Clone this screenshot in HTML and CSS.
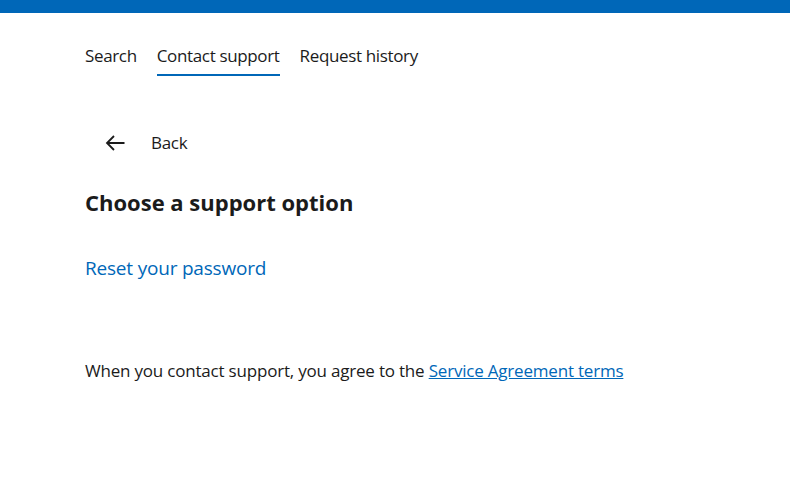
FILE: index.html
```html
<!DOCTYPE html>
<html lang="en">
<head>
<meta charset="utf-8">
<link rel="stylesheet" href="styles.css">
</head>
<body>
<div class="topbar"></div>
<main class="content">
  <nav class="tabs">
    <a class="tab">Search</a>
    <a class="tab active">Contact support</a>
    <a class="tab">Request history</a>
  </nav>
  <button class="back">
    <svg width="20" height="16" viewBox="0 0 20 16" aria-hidden="true"><path d="M19.5 8H2M9 1L2 8l7 7" fill="none" stroke="#1b1b1b" stroke-width="1.8"/></svg>
    <span>Back</span>
  </button>
  <h1 class="title">Choose a support option</h1>
  <a class="option">Reset your password</a>
  <p class="terms">When you contact support, you agree to the <a class="terms-link">Service Agreement terms</a></p>
</main>
</body>
</html>
```
FILE: styles.css
```css
html, body { margin: 0; padding: 0; background: #fff; }
body { font-family: "Open Sans", "Noto Sans", sans-serif; color: #1b1b1b; }
.topbar { height: 13px; background: #0067b8; }
.content { padding: 0 0 0 85px; display: flex; flex-direction: column; align-items: flex-start; }
.tabs { display: flex; gap: 20px; margin-top: 31px; }
.tab { font-size: 17px; line-height: 24px; padding-bottom: 6px; border-bottom: 2px solid transparent; color: #1b1b1b; letter-spacing: -0.35px; }
.tab.active { border-bottom-color: #0067b8; }
.back { display: flex; align-items: center; gap: 26px; background: none; border: 0; padding: 0 0 0 20px; margin-top: 55px; font: inherit; font-size: 17px; color: #1b1b1b; letter-spacing: -0.3px; }
.title { font-size: 22px; font-weight: 700; margin: 34px 0 0; line-height: 28px; }
.option { font-size: 19px; color: #0067b8; margin-top: 39px; line-height: 26px; letter-spacing: -0.2px; }
.terms { font-size: 17px; margin: 78px 0 0; line-height: 24px; letter-spacing: -0.2px; }
.terms-link { color: #0067b8; text-decoration: underline; }
```
